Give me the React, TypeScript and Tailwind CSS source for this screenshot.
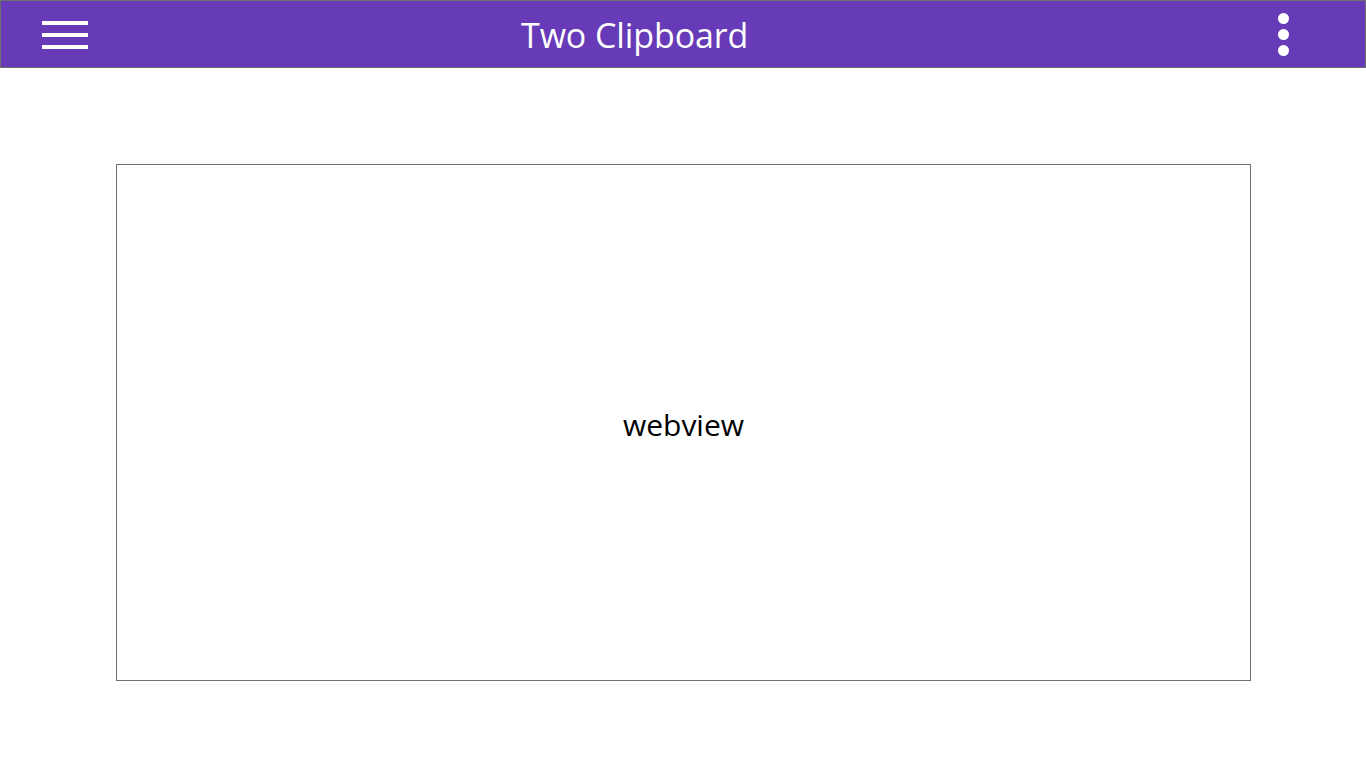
import React from "react";

export default function App() {
  return (
    <div className="w-[1366px] h-[768px] bg-white" style={{ fontFamily: '"Open Sans", "Noto Sans", sans-serif' }}>
      <header className="h-[68px] bg-[#673ab7] border border-[#6e6e6e] flex items-center justify-between relative">
        <button className="ml-[41px] mt-[2px] flex flex-col gap-[8px] w-[46px]">
          <span className="block h-[4px] bg-white" />
          <span className="block h-[4px] bg-white" />
          <span className="block h-[4px] bg-white" />
        </button>
        <h1 className="absolute left-[520px] top-[14px] text-white text-[34px] leading-[40px] tracking-[-0.1px]">Two Clipboard</h1>
        <div className="mr-[76px] flex flex-col gap-[5px] items-center">
          <span className="block w-[11px] h-[11px] rounded-full bg-white" />
          <span className="block w-[11px] h-[11px] rounded-full bg-white" />
          <span className="block w-[11px] h-[11px] rounded-full bg-white" />
        </div>
      </header>
      <div className="ml-[116px] mt-[96px] w-[1135px] h-[517px] border border-[#707070] flex items-center justify-center">
        <span className="text-black text-[30px] leading-[36px] mt-[5px]">webview</span>
      </div>
    </div>
  );
}
